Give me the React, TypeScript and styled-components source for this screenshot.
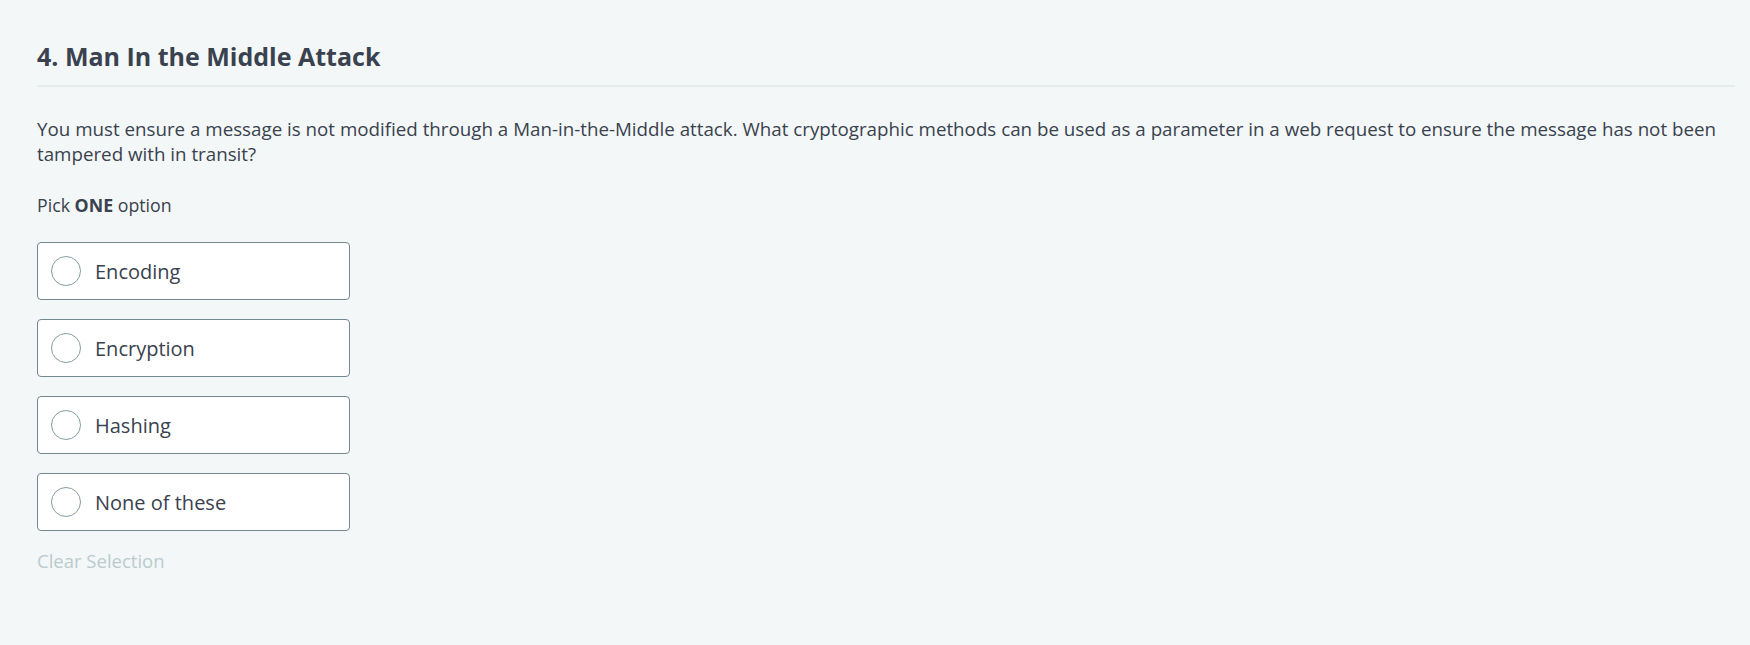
import React from "react";
import styled, { createGlobalStyle } from "styled-components";

const Global = createGlobalStyle`
  html, body { margin: 0; padding: 0; background: #f3f7f7; }
  body { font-family: "Open Sans", "Noto Sans", sans-serif; color: #39424e; }
`;

const Page = styled.div`
  padding: 41px 15px 40px 37px;
  min-height: 645px;
  box-sizing: border-box;
`;

const Title = styled.h2`
  margin: 0;
  font-size: 25px;
  font-weight: 700;
  line-height: 30px;
  color: #39424e;
  padding-bottom: 14px;
  border-bottom: 2px solid #e6ebec;
`;

const Question = styled.p`
  margin: 29px 0 0;
  font-size: 18.75px;
  line-height: 25px;
  color: #39424e;
`;

const Hint = styled.p`
  margin: 27px 0 0;
  font-size: 17.75px;
  line-height: 24px;
  color: #39424e;
  b { font-weight: 700; }
`;

const Options = styled.div`
  display: flex;
  flex-direction: column;
  gap: 19px;
  margin-top: 25px;
`;

const Option = styled.label`
  box-sizing: border-box;
  width: 313px;
  height: 58px;
  display: flex;
  align-items: center;
  gap: 14px;
  padding: 0 13px;
  background: #ffffff;
  border: 1px solid #73898f;
  border-radius: 4px;
  cursor: pointer;
`;

const Radio = styled.span`
  box-sizing: border-box;
  width: 30px;
  height: 30px;
  border-radius: 50%;
  border: 1px solid #869da2;
  background: #fff;
  flex: none;
`;

const OptionText = styled.span`
  font-size: 20px;
  color: #39424e;
`;

const Clear = styled.div`
  margin-top: 18px;
  font-size: 18.5px;
  line-height: 24px;
  color: #bacbce;
`;

const options = ["Encoding", "Encryption", "Hashing", "None of these"];

export default function App() {
  return (
    <>
      <Global />
      <Page>
        <Title>4. Man In the Middle Attack</Title>
        <Question>
          You must ensure a message is not modified through a Man-in-the-Middle attack. What cryptographic methods can be used as a parameter in a web request to ensure the message has not been tampered with in transit?
        </Question>
        <Hint>
          Pick <b>ONE</b> option
        </Hint>
        <Options>
          {options.map((o) => (
            <Option key={o}>
              <Radio />
              <OptionText>{o}</OptionText>
            </Option>
          ))}
        </Options>
        <Clear>Clear Selection</Clear>
      </Page>
    </>
  );
}
